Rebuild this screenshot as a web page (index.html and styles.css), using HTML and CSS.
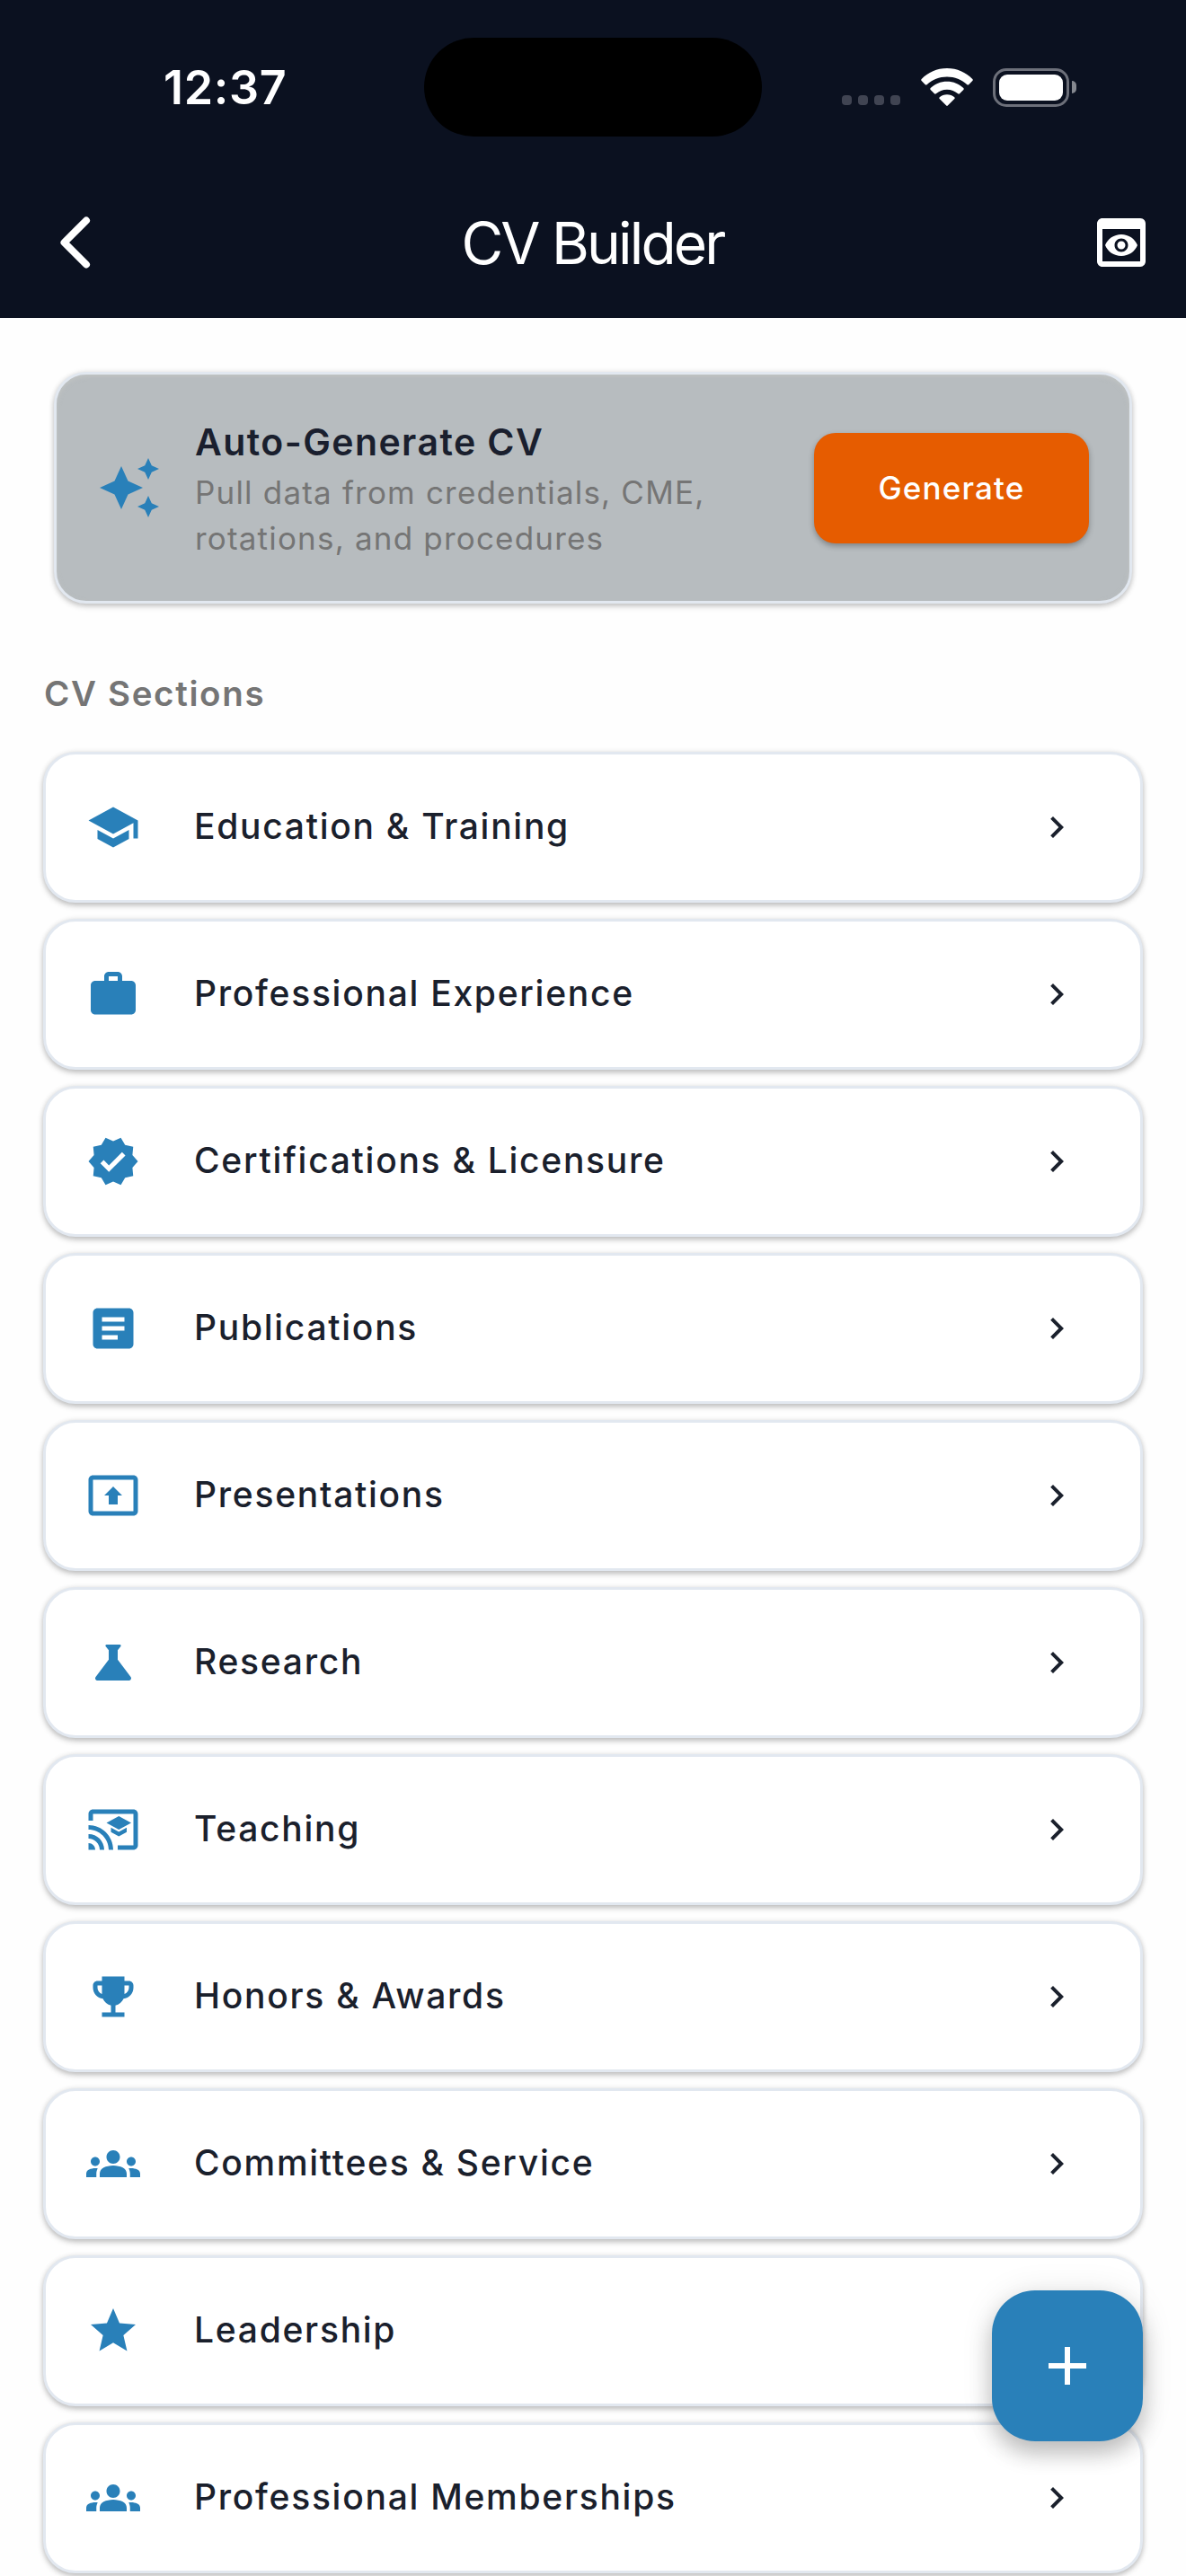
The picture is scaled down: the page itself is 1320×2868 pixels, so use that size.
FILE: index.html
```html
<!DOCTYPE html>
<html lang="en">
  <head>
    <meta charset="UTF-8" />
    <meta name="viewport" content="width=device-width, initial-scale=1.0" />
    <title>CV Builder</title>
    <link rel="stylesheet" href="styles.css">
  </head>
  <body>
    <header class="header">
      <div class="status">
        <div class="time">12:37</div>
        <div class="island"></div>
        <div class="indicators">
          <div class="signal"><i></i><i></i><i></i><i></i></div>
          <svg class="wifi" width="58" height="43" viewBox="0 0 58 43" fill="#fff">
            <path d="M29 0C40.200 0 50 4.500 57.300 11.900Q58.300 13 57.300 14L53.200 18.200Q52.300 19 51.400 18.200C45.300 12.600 37.600 9.400 29 9.400S12.700 12.600 6.600 18.200Q5.700 19 4.800 18.200L.7 14Q-.3 13 .7 11.900C8 4.500 17.800 0 29 0z"/>
            <path d="M29 14.700C36.100 14.700 42.500 17.400 47.300 22Q48.300 23 47.300 24L43 28.300Q42.100 29.100 41.200 28.300C37.900 25.400 33.700 23.700 29 23.700S20.100 25.400 16.800 28.300Q15.900 29.100 15 28.300L10.700 24Q9.700 23 10.700 22C15.500 17.400 21.900 14.700 29 14.700z"/>
            <path d="M29 29.200C32.300 29.200 35.100 30.300 37.300 32.200Q38.300 33.100 37.300 34.100L29.800 41.600Q29 42.400 28.200 41.600L20.700 34.100Q19.700 33.100 20.700 32.200C22.900 30.300 25.700 29.200 29 29.200z"/>
          </svg>
          <div class="battery">
            <div class="shell"><div class="level"></div></div>
            <div class="nub"></div>
          </div>
        </div>
      </div>
      <div class="toolbar">
        <svg class="back" width="72" height="72" viewBox="0 0 72 72">
          <path d="M48 11.500L23.500 36L48 60.500" fill="none" stroke="#fff" stroke-width="8" stroke-linecap="round" stroke-linejoin="round"/>
        </svg>
        <h1 class="title">CV Builder</h1>
        <svg class="preview" width="72" height="72" viewBox="0 0 24 24" fill="#fff">
          <path d="M19 3H5c-1.110 0-2 .9-2 2v14c0 1.100.89 2 2 2h14c1.100 0 2-.9 2-2V5c0-1.100-.89-2-2-2zm0 16H5V7h14v12zm-5.500-6c0 .83-.67 1.500-1.500 1.500s-1.500-.67-1.500-1.500.67-1.500 1.500-1.500 1.500.67 1.500 1.500zM12 9c-2.730 0-5.060 1.660-6 4 .94 2.340 3.270 4 6 4s5.060-1.660 6-4c-.94-2.340-3.270-4-6-4zm0 6.500c-1.380 0-2.500-1.120-2.500-2.500s1.120-2.500 2.500-2.500 2.500 1.120 2.500 2.500-1.120 2.500-2.500 2.500z"/>
        </svg>
      </div>
    </header>

    <main class="content">
      <section class="auto">
        <svg class="auto-icon" width="72" height="72" viewBox="0 0 24 24">
          <path d="M19 9l1.250-2.750L23 5l-2.750-1.250L19 1l-1.250 2.750L15 5l2.750 1.250L19 9zm-7.500.5L9 4 6.500 9.500 1 12l5.500 2.500L9 20l2.500-5.500L17 12l-5.500-2.500zM19 15l-1.250 2.750L15 19l2.750 1.250L19 23l1.250-2.750L23 19l-2.750-1.250L19 15z"/>
        </svg>
        <div class="auto-text">
          <div class="auto-title">Auto-Generate CV</div>
          <div class="auto-sub">Pull data from credentials, CME,<br>rotations, and procedures</div>
        </div>
        <button class="generate">Generate</button>
      </section>

      <h2 class="subtitle">CV Sections</h2>

      <div class="list">
        <div class="item">
          <svg class="icon" viewBox="0 0 24 24"><path d="M5 13.180v4L12 21l7-3.820v-4L12 17l-7-3.820zM12 3L1 9l11 6 9-4.910V17h2V9L12 3z"/></svg>
          <span class="label">Education &amp; Training</span>
          <svg class="arrow" viewBox="0 0 24 24"><path d="M10 6L8.590 7.410 13.170 12l-4.580 4.590L10 18l6-6z"/></svg>
        </div>
        <div class="item">
          <svg class="icon" viewBox="0 0 24 24"><path d="M20 6h-4V4c0-1.110-.89-2-2-2h-4c-1.110 0-2 .89-2 2v2H4c-1.110 0-1.990.89-1.990 2L2 19c0 1.110.89 2 2 2h16c1.110 0 2-.89 2-2V8c0-1.110-.89-2-2-2zm-6 0h-4V4h4v2z"/></svg>
          <span class="label">Professional Experience</span>
          <svg class="arrow" viewBox="0 0 24 24"><path d="M10 6L8.590 7.410 13.170 12l-4.580 4.590L10 18l6-6z"/></svg>
        </div>
        <div class="item">
          <svg class="icon" viewBox="0 0 24 24"><path d="M23 12l-2.440-2.790.34-3.690-3.610-.82-1.890-3.200L12 2.960 8.600 1.500 6.710 4.690 3.100 5.500l.34 3.700L1 12l2.440 2.790-.34 3.700 3.610.82L8.600 22.500l3.400-1.470 3.400 1.460 1.890-3.190 3.610-.82-.34-3.690L23 12zm-12.910 4.720l-3.800-3.810 1.480-1.480 2.320 2.330 5.850-5.870 1.480 1.480-7.330 7.350z"/></svg>
          <span class="label">Certifications &amp; Licensure</span>
          <svg class="arrow" viewBox="0 0 24 24"><path d="M10 6L8.590 7.410 13.170 12l-4.580 4.590L10 18l6-6z"/></svg>
        </div>
        <div class="item">
          <svg class="icon" viewBox="0 0 24 24"><path d="M19 3H5c-1.100 0-2 .9-2 2v14c0 1.100.9 2 2 2h14c1.100 0 2-.9 2-2V5c0-1.100-.9-2-2-2zm-5 14H7v-2h7v2zm3-4H7v-2h10v2zm0-4H7V7h10v2z"/></svg>
          <span class="label">Publications</span>
          <svg class="arrow" viewBox="0 0 24 24"><path d="M10 6L8.590 7.410 13.170 12l-4.580 4.590L10 18l6-6z"/></svg>
        </div>
        <div class="item">
          <svg class="icon" viewBox="0 0 24 24"><path d="M21 3H3c-1.110 0-2 .89-2 2v14c0 1.110.89 2 2 2h18c1.110 0 2-.89 2-2V5c0-1.110-.89-2-2-2zm0 16.020H3V4.980h18v14.040zM10 12H8l4-4 4 4h-2v4h-4v-4z"/></svg>
          <span class="label">Presentations</span>
          <svg class="arrow" viewBox="0 0 24 24"><path d="M10 6L8.590 7.410 13.170 12l-4.580 4.590L10 18l6-6z"/></svg>
        </div>
        <div class="item">
          <svg class="icon" viewBox="0 0 24 24"><path d="M19.800 18.400L14 10.670V6.500l1.350-1.690c.26-.33.03-.81-.39-.81H9.040c-.42 0-.65.48-.39.81L10 6.500v4.170L4.200 18.400c-.49.66-.02 1.600.8 1.600h14c.82 0 1.290-.94.8-1.600z"/></svg>
          <span class="label">Research</span>
          <svg class="arrow" viewBox="0 0 24 24"><path d="M10 6L8.590 7.410 13.170 12l-4.580 4.590L10 18l6-6z"/></svg>
        </div>
        <div class="item">
          <svg class="icon" viewBox="0 0 24 24"><path d="M21 3H3c-1.100 0-2 .9-2 2v3h2V5h18v14h-7v2h7c1.100 0 2-.9 2-2V5c0-1.100-.9-2-2-2zM1 18v3h3c0-1.660-1.340-3-3-3zm0-4v2c2.760 0 5 2.240 5 5h2c0-3.870-3.130-7-7-7zm0-4v2c4.970 0 9 4.030 9 9h2c0-6.080-4.930-11-11-11zm10 1.090v2L14.500 15l3.500-1.910v-2L14.500 13 11 11.090zM14.500 6L9 9l5.500 3L20 9l-5.500-3z"/></svg>
          <span class="label">Teaching</span>
          <svg class="arrow" viewBox="0 0 24 24"><path d="M10 6L8.590 7.410 13.170 12l-4.580 4.590L10 18l6-6z"/></svg>
        </div>
        <div class="item">
          <svg class="icon" viewBox="0 0 24 24"><path d="M19 5h-2V3H7v2H5c-1.100 0-2 .9-2 2v1c0 2.550 1.920 4.630 4.390 4.940.63 1.500 1.980 2.630 3.610 2.960V19H7v2h10v-2h-4v-3.100c1.630-.33 2.980-1.460 3.610-2.960C19.080 12.630 21 10.550 21 8V7c0-1.100-.9-2-2-2zM5 8V7h2v3.820C5.840 10.400 5 9.300 5 8zm14 0c0 1.300-.84 2.400-2 2.820V7h2v1z"/></svg>
          <span class="label">Honors &amp; Awards</span>
          <svg class="arrow" viewBox="0 0 24 24"><path d="M10 6L8.590 7.410 13.170 12l-4.580 4.590L10 18l6-6z"/></svg>
        </div>
        <div class="item">
          <svg class="icon" viewBox="0 0 24 24"><path d="M12 12.750c1.630 0 3.070.39 4.240.9 1.080.48 1.760 1.560 1.760 2.730V18H6v-1.610c0-1.180.68-2.260 1.760-2.730 1.170-.52 2.610-.91 4.240-.91zM4 13c1.100 0 2-.9 2-2s-.9-2-2-2-2 .9-2 2 .9 2 2 2zm1.130 1.100c-.37-.06-.74-.1-1.130-.1-.99 0-1.930.21-2.780.58C.48 14.900 0 15.620 0 16.430V18h4.500v-1.610c0-.83.23-1.610.63-2.290zM20 13c1.100 0 2-.9 2-2s-.9-2-2-2-2 .9-2 2 .9 2 2 2zm4 3.430c0-.81-.48-1.530-1.220-1.850-.85-.37-1.790-.58-2.780-.58-.39 0-.76.04-1.130.1.400.68.630 1.460.630 2.290V18H24v-1.570zM12 6c1.660 0 3 1.340 3 3s-1.340 3-3 3-3-1.340-3-3 1.340-3 3-3z"/></svg>
          <span class="label">Committees &amp; Service</span>
          <svg class="arrow" viewBox="0 0 24 24"><path d="M10 6L8.590 7.410 13.170 12l-4.580 4.590L10 18l6-6z"/></svg>
        </div>
        <div class="item">
          <svg class="icon" viewBox="0 0 24 24"><path d="M12 17.270L18.180 21l-1.640-7.030L22 9.240l-7.190-.61L12 2 9.190 8.630 2 9.240l5.460 4.730L5.820 21z"/></svg>
          <span class="label">Leadership</span>
          <svg class="arrow" viewBox="0 0 24 24"><path d="M10 6L8.590 7.410 13.170 12l-4.580 4.590L10 18l6-6z"/></svg>
        </div>
        <div class="item">
          <svg class="icon" viewBox="0 0 24 24"><path d="M12 12.750c1.630 0 3.070.39 4.240.9 1.080.48 1.760 1.560 1.760 2.730V18H6v-1.610c0-1.180.68-2.260 1.760-2.730 1.170-.52 2.610-.91 4.240-.91zM4 13c1.100 0 2-.9 2-2s-.9-2-2-2-2 .9-2 2 .9 2 2 2zm1.130 1.100c-.37-.06-.74-.1-1.130-.1-.99 0-1.930.21-2.780.58C.48 14.900 0 15.620 0 16.430V18h4.500v-1.610c0-.83.23-1.610.63-2.290zM20 13c1.100 0 2-.9 2-2s-.9-2-2-2-2 .9-2 2 .9 2 2 2zm4 3.430c0-.81-.48-1.530-1.220-1.850-.85-.37-1.790-.58-2.780-.58-.39 0-.76.04-1.130.1.400.68.630 1.460.630 2.290V18H24v-1.570zM12 6c1.660 0 3 1.340 3 3s-1.340 3-3 3-3-1.340-3-3 1.340-3 3-3z"/></svg>
          <span class="label">Professional Memberships</span>
          <svg class="arrow" viewBox="0 0 24 24"><path d="M10 6L8.590 7.410 13.170 12l-4.580 4.590L10 18l6-6z"/></svg>
        </div>
      </div>
    </main>

    <button class="fab" aria-label="Add">
      <svg width="72" height="72" viewBox="0 0 24 24" fill="#fff"><path d="M19 13h-6v6h-2v-6H5v-2h6V5h2v6h6v2z"/></svg>
    </button>
  </body>
</html>
```
FILE: styles.css
```css
* {
  box-sizing: border-box;
}
body {
  margin: 0;
  width: 1320px;
  height: 2868px;
  overflow: hidden;
  position: relative;
  background-color: #fefefe;
  color: #1a202c;
  font-family: Inter, "Liberation Sans", sans-serif;
}
svg {
  display: block;
  flex: none;
}

/* header */
.header {
  height: 354px;
  background-color: #0b1120;
}
.status {
  height: 186px;
  padding: 42px 122px 0 182px;
  display: grid;
  grid-template-columns: 290px 376px 1fr;
  align-items: start;
  color: #fff;
}
.time {
  font-size: 52px;
  font-weight: 600;
  line-height: 112px;
  letter-spacing: 0.7px;
}
.island {
  height: 110px;
  border-radius: 55px;
  background-color: #000;
}
.indicators {
  height: 110px;
  display: flex;
  align-items: center;
  justify-content: flex-end;
}
.signal {
  display: flex;
  gap: 7px;
  margin: 29px 23px 0 0;
}
.signal i {
  width: 11px;
  height: 11px;
  border-radius: 4px;
  background-color: #404452;
}
.wifi {
  margin-right: 22px;
}
.battery {
  display: flex;
  align-items: center;
  gap: 3px;
}
.shell {
  width: 85px;
  height: 43px;
  padding: 4px;
  border: 3px solid #6d707a;
  border-radius: 15px;
}
.level {
  height: 100%;
  border-radius: 9px;
  background-color: #fff;
}
.nub {
  width: 5px;
  height: 14px;
  border-radius: 0 5px 5px 0;
  background-color: #85888f;
}
.toolbar {
  height: 168px;
  padding: 0 36px 0 48px;
  display: flex;
  align-items: center;
  justify-content: space-between;
}
.title {
  margin: 0 0 0 -13px;
  color: #fff;
  font-size: 64px;
  font-weight: 400;
  letter-spacing: -2.8px;
}

/* content */
.content {
  padding: 60px 48px 0;
}
.auto {
  height: 258px;
  margin: 0 12px;
  padding: 0 45px;
  display: flex;
  align-items: center;
  border: 3px solid #e2e8f0;
  border-radius: 36px;
  background-color: #b7bcbf;
  box-shadow: 0 3px 6px rgba(0, 0, 0, 0.22), 0 0 6px rgba(0, 0, 0, 0.08), inset 0 2px 5px rgba(205, 205, 200, 0.5);
}
.auto-icon {
  fill: #2980b9;
}
.auto-text {
  flex: 1;
  padding: 6px 0 0 37px;
}
.auto-title {
  margin-bottom: 6px;
  font-size: 41px;
  font-weight: 600;
  line-height: 50px;
  letter-spacing: 1.42px;
  color: #1a1f2e;
}
.auto-sub {
  font-size: 35px;
  line-height: 51px;
  letter-spacing: 1.19px;
  color: #757575;
}
.generate {
  width: 306px;
  height: 123px;
  padding: 0;
  border: none;
  border-radius: 24px;
  background-color: #e65c00;
  color: #fff;
  font-family: inherit;
  font-size: 35px;
  font-weight: 500;
  letter-spacing: 1.15px;
  box-shadow: 0 3px 6px rgba(0, 0, 0, 0.3);
}
.subtitle {
  margin: 75px 0 40px 1px;
  font-size: 38.5px;
  font-weight: 600;
  line-height: 50px;
  letter-spacing: 1.64px;
  color: #757575;
}
.list {
  display: flex;
  flex-direction: column;
  gap: 18px;
}
.item {
  height: 168px;
  padding: 0 69px 0 45px;
  display: flex;
  align-items: center;
  border: 3px solid #e2e8f0;
  border-radius: 36px;
  background-color: #fff;
  box-shadow: 0 3px 6px rgba(0, 0, 0, 0.25), 0 0 6px rgba(0, 0, 0, 0.06);
}
.icon {
  width: 60px;
  height: 60px;
  fill: #2980b9;
}
.label {
  flex: 1;
  padding: 0 0 3px 60px;
  font-size: 39px;
  font-weight: 500;
  line-height: 56px;
  letter-spacing: 1.72px;
}
.arrow {
  width: 48px;
  height: 48px;
  fill: #1a202c;
}

/* floating button over the list */
.fab {
  position: absolute;
  right: 48px;
  bottom: 150px;
  width: 168px;
  height: 168px;
  padding: 0;
  display: flex;
  align-items: center;
  justify-content: center;
  border: none;
  border-radius: 48px;
  background-color: #2980b9;
  box-shadow: 0 14px 24px rgba(0, 0, 0, 0.22), 0 2px 36px rgba(0, 0, 0, 0.1);
}
```
